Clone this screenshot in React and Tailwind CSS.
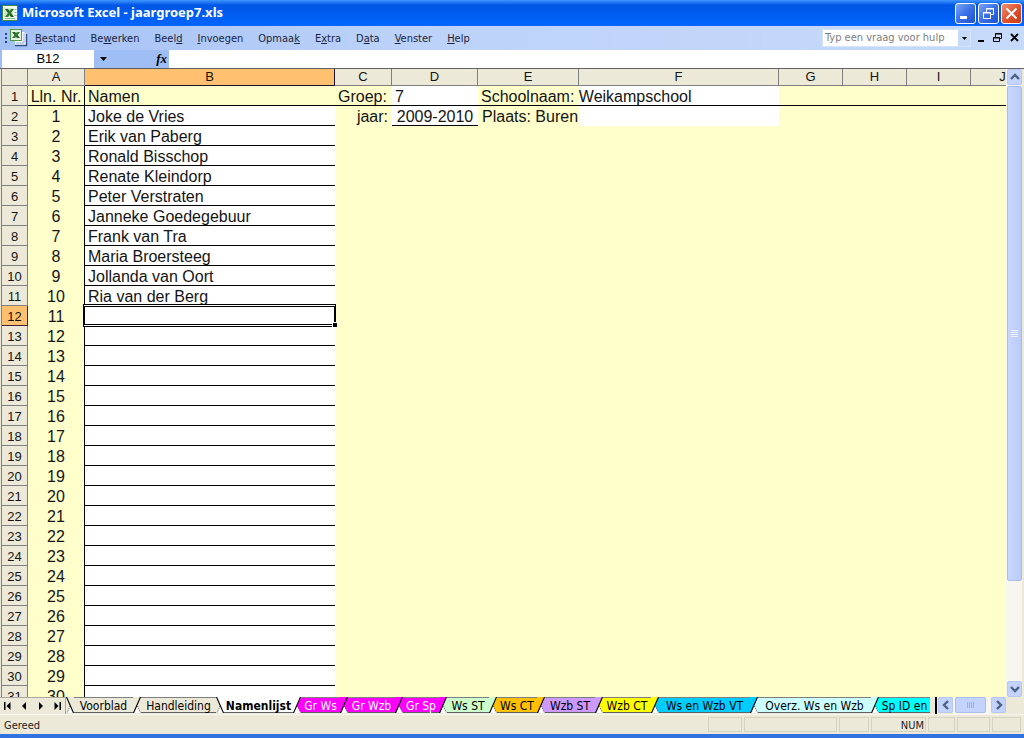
// src/App.jsx
import React from 'react';
import clsx from 'clsx';

const menuItems = [
  ['', 'B', 'estand'],
  ['Be', 'w', 'erken'],
  ['Beel', 'd', ''],
  ['', 'I', 'nvoegen'],
  ['Opmaa', 'k', ''],
  ['E', 'x', 'tra'],
  ['D', 'a', 'ta'],
  ['', 'V', 'enster'],
  ['', 'H', 'elp'],
];

const columns = [
  { name: 'A', width: 'w-[57px]' },
  { name: 'B', width: 'w-[250px]' },
  { name: 'C', width: 'w-[57px]' },
  { name: 'D', width: 'w-[86px]' },
  { name: 'E', width: 'w-[101px]' },
  { name: 'F', width: 'w-[200px]' },
  { name: 'G', width: 'w-16' },
  { name: 'H', width: 'w-16' },
  { name: 'I', width: 'w-16' },
  { name: 'J', width: 'w-16' },
];

const names = [
  'Joke de Vries',
  'Erik van Paberg',
  'Ronald Bisschop',
  'Renate Kleindorp',
  'Peter Verstraten',
  'Janneke Goedegebuur',
  'Frank van Tra',
  'Maria Broersteeg',
  'Jollanda van Oort',
  'Ria van der Berg',
];

const SELECTED_ROW = 12;
const rowNumbers = Array.from({ length: 30 }, (_, i) => i + 2);

// lead = kind of edge on the left side of the tab
const sheets = [
  { title: 'Voorblad', width: 'w-[59px]', color: 'bg-[#ece9d8]', fill: '#ece9d8', lead: 'back' },
  { title: 'Handleiding', width: 'w-[75px]', color: 'bg-[#ece9d8]', fill: '#ece9d8' },
  { title: 'Namenlijst', width: 'w-[69px]', color: 'bg-white', fill: '#ffffff', lead: 'back', active: true },
  { title: 'Gr Ws', width: 'w-[39px]', color: 'bg-[#ff00ff] text-white', fill: '#ff00ff' },
  { title: 'Gr Wzb', width: 'w-[47px]', color: 'bg-[#ff00ff] text-white', fill: '#ff00ff' },
  { title: 'Gr Sp', width: 'w-[36px]', color: 'bg-[#ff00ff] text-white', fill: '#ff00ff' },
  { title: 'Ws ST', width: 'w-[42px]', color: 'bg-[#ccffcc]', fill: '#ccffcc' },
  { title: 'Ws CT', width: 'w-[40px]', color: 'bg-[#ffc000]', fill: '#ffc000' },
  { title: 'Wzb ST', width: 'w-[50px]', color: 'bg-[#cc99ff]', fill: '#cc99ff' },
  { title: 'Wzb CT', width: 'w-[48px]', color: 'bg-[#ffff00]', fill: '#ffff00' },
  { title: 'Ws en Wzb VT', width: 'w-[91px]', color: 'bg-[#00ccff]', fill: '#00ccff' },
  { title: 'Overz. Ws en Wzb', width: 'w-[113px]', color: 'bg-[#ccffff]', fill: '#ccffff' },
  { title: 'Sp ID en', width: 'w-[51px]', color: 'bg-[#00ffff]', fill: '#00ffff' },
];

function ExcelIcon() {
  return (
    <svg className="h-4 w-4 shrink-0" viewBox="0 0 16 16">
      <rect x="0.5" y="0.5" width="15" height="15" fill="#f4faf0" stroke="#3c8a3c" />
      <path d="M2 3 h9 v9 h-9 z" fill="#cfe8c8" />
      <path d="M3 4 h3 l6 8 h-3 z" fill="#1f5f22" />
      <path d="M9 4 h3 l-6 8 h-3 z" fill="#2f7d32" />
      <path d="M12.5 4.5 h2 M12.5 7.5 h2 M12.5 10.5 h2 M3 13.5 h10" stroke="#7db87d" />
    </svg>
  );
}

function WorkbookIcon() {
  return (
    <svg className="h-[18px] w-[18px] shrink-0" viewBox="0 0 18 18">
      <path d="M5 3 h9 l3 3 v11 H5 z" fill="#fff" />
      <path d="M5 16.5 h11.5 V5" fill="none" stroke="#2f4f8c" strokeWidth="1.5" />
      <path d="M6 14 h8 V4" fill="none" stroke="#8aa4d8" />
      <rect x="0.5" y="0.5" width="11" height="11" fill="#e8f5e4" stroke="#4c9a4c" />
      <path d="M2 3 h3 l5 6 h-3 z" fill="#1f5f22" />
      <path d="M7 3 h3 l-5 6 h-3 z" fill="#2f7d32" />
    </svg>
  );
}

function WindowButton({ label, danger, children }) {
  return (
    <button
      aria-label={label}
      className={clsx(
        'flex h-[21px] w-[21px] items-center justify-center rounded-[3px] border border-white',
        danger
          ? 'bg-linear-to-br from-[#f09070] via-[#e0532c] to-[#c83c14]'
          : 'bg-linear-to-br from-[#7ca4f4] via-[#3b6fe6] to-[#1e50d0]'
      )}
    >
      <svg className="h-[19px] w-[19px]" viewBox="0 0 19 19" fill="none" stroke="#fff">
        {children}
      </svg>
    </button>
  );
}

function TitleBar() {
  return (
    <header className="flex h-[26px] shrink-0 items-center gap-1 bg-linear-to-b from-[#3d95ff] via-[#0055e5] via-20% to-[#0066ff] pr-0.5 pl-0.5">
      <ExcelIcon />
      <h1 className="flex-1 font-['Noto_Sans','Open_Sans',sans-serif] text-[13px] font-bold text-white">
        Microsoft Excel - jaargroep7.xls
      </h1>
      <div className="flex gap-0.5">
        <WindowButton label="Minimaliseren">
          <path d="M4 13.5 h7" strokeWidth="3" />
        </WindowButton>
        <WindowButton label="Verkleinen">
          <path d="M7.5 8 v-3.5 h7 v6 h-3 M7 5 h8" />
          <path d="M4.5 8.5 h7 v6 h-7 z M4 9 h8" />
        </WindowButton>
        <WindowButton label="Sluiten" danger>
          <path d="M4.5 4.5 L14.5 14.5 M14.5 4.5 L4.5 14.5" strokeWidth="2" />
        </WindowButton>
      </div>
    </header>
  );
}

function MenuBar() {
  return (
    <div className="flex h-6 shrink-0 items-center bg-linear-to-r from-[#a4c1f5] via-[#bcd2f8] via-40% to-[#c6dafa] pr-px pl-1 text-[11px] text-[#1a2440]">
      <svg className="h-4 w-1.5" viewBox="0 0 6 16" fill="#27419a">
        <path d="M1 3 h2 v2 H1 z M1 7 h2 v2 H1 z M1 11 h2 v2 H1 z" />
      </svg>
      <WorkbookIcon />
      <nav className="ml-[7px] flex flex-1 gap-[15px] pt-0.5">
        {menuItems.map(([before, key, after]) => (
          <button key={before + key + after} className="leading-4">
            {before}<span className="underline">{key}</span>{after}
          </button>
        ))}
      </nav>
      <div className="flex h-[18px] w-[149px] border border-[#d4e2fa] bg-white">
        <input
          aria-label="Typ een vraag voor hulp"
          placeholder="Typ een vraag voor hulp"
          className="min-w-0 flex-1 pl-0.5 text-[11px] outline-none placeholder:text-[#808080]"
        />
        <button aria-label="Vragenlijst" className="flex w-3 items-center justify-center bg-[#c6dafa]">
          <svg className="h-[3px] w-[5px]" viewBox="0 0 5 3"><path d="M0 0 h5 L2.5 3 z" /></svg>
        </button>
      </div>
      <div className="ml-1 flex gap-[3px]">
        <button aria-label="Werkmap minimaliseren">
          <svg className="h-3.5 w-3.5" viewBox="0 0 14 14"><path d="M3 9 h6 v2 H3 z" /></svg>
        </button>
        <button aria-label="Werkmap verkleinen">
          <svg className="h-3.5 w-3.5" viewBox="0 0 14 14" fill="none" stroke="#000">
            <path d="M3.5 6 v-3.5 h6 v5 h-2 M3 3 h7 M1.5 6.5 h6 v4 h-6 z M1 7 h7" />
          </svg>
        </button>
        <button aria-label="Werkmap sluiten">
          <svg className="h-3.5 w-3.5" viewBox="0 0 14 14"><path d="M2 3 L9 10 M9 3 L2 10" stroke="#000" strokeWidth="1.8" /></svg>
        </button>
      </div>
    </div>
  );
}

function FormulaBar() {
  return (
    <div className="flex h-[18px] shrink-0 bg-[#9ebef5] pl-0.5 font-['Liberation_Sans',Arial,sans-serif]">
      <input aria-label="Naamvak" defaultValue="B12" className="w-[92px] bg-white text-center text-[13px] outline-none" />
      <button aria-label="Namen" className="flex w-[18px] items-center justify-center">
        <svg className="h-1 w-[7px]" viewBox="0 0 7 4"><path d="M0 0 h7 L3.5 4 z" /></svg>
      </button>
      <button
        aria-label="Functie invoegen"
        className="w-[57px] pr-0.5 text-right font-['Liberation_Serif',serif] text-[13px] leading-4 font-bold italic"
      >
        fx
      </button>
      <input aria-label="Formulebalk" className="min-w-0 flex-1 bg-white px-1 text-[13px] outline-none" />
    </div>
  );
}

function RowHeader({ number }) {
  const selected = number === SELECTED_ROW;
  return (
    <th
      scope="row"
      className={clsx(
        'h-5 border-r border-b p-0 pt-0.5 text-center text-[13px] leading-[17px] font-normal',
        selected ? 'border-[#40203a] bg-[#ffc06f]' : 'border-[#808080] bg-[#ece9d8]'
      )}
    >
      {number}
    </th>
  );
}

function Sheet() {
  return (
    <div className="min-w-0 flex-1 overflow-hidden border-l border-[#808080] bg-[#ffffcc]">
      <table className="w-full table-fixed border-separate border-spacing-0 font-['Liberation_Sans',Arial,sans-serif] text-[16px] leading-[17px] whitespace-nowrap text-[#141414]">
        <thead>
          <tr className="text-[13px] leading-4">
            <th className="h-[17px] w-[26px] border-r border-b border-[#808080] bg-[#ece9d8] p-0"></th>
            {columns.map((column) => (
              <th
                key={column.name}
                scope="col"
                className={clsx(
                  'h-[17px] border-r border-b p-0 font-normal',
                  column.width,
                  column.name === 'B' ? 'border-[#201030] bg-[#ffc06f]' : 'border-[#808080] bg-[#ece9d8]'
                )}
              >
                {column.name}
              </th>
            ))}
            {/* takes up the rest of a wide window */}
            <th className="border-b border-[#808080] bg-[#ece9d8] p-0"></th>
          </tr>
        </thead>
        <tbody>
          <tr>
            <RowHeader number={1} />
            <td className="border-r border-b border-black p-0 pt-0.5 text-center">Lln. Nr.</td>
            <td className="border-b border-black p-0 pt-0.5 pl-[3px]">Namen</td>
            <td className="border-b border-black p-0 pt-0.5 pl-[3px]">Groep:</td>
            <td className="border-b border-black bg-white p-0 pt-0.5 pl-[3px]">7</td>
            <td className="border-b border-black p-0 pt-0.5 pl-[3px]">Schoolnaam: Weikampschool</td>
            <td className="border-b border-black bg-white p-0"></td>
            <td colSpan={5} className="border-b border-black p-0"></td>
          </tr>
          {rowNumbers.map((row) => (
            <tr key={row} className="align-top">
              <RowHeader number={row} />
              <td className="border-r border-black p-0 pt-0.5 text-center">{row - 1}</td>
              <td className="relative border-b border-black bg-white p-0 pt-0.5 pl-[3px]">
                {names[row - 2]}
                {row === SELECTED_ROW && (
                  <div className="absolute -top-0.5 -right-px -bottom-0.5 -left-0.5 z-10 border-x-2 border-y-3 border-black bg-white [border-bottom-style:double] [border-top-style:double]">
                    <span className="absolute -right-[3px] -bottom-[3px] h-[5px] w-[5px] border-t border-l border-white bg-black"></span>
                  </div>
                )}
              </td>
              {row === 2 && (
                <>
                  <td className="p-0 pt-0.5 pr-1 text-right">jaar:</td>
                  <td className="border-b border-black bg-white p-0 pt-0.5 text-center">2009-2010</td>
                  <td className="p-0 pt-0.5 pl-1">Plaats: Buren</td>
                  <td className="bg-white p-0"></td>
                </>
              )}
              <td colSpan={row === 2 ? 5 : 9} className="p-0"></td>
            </tr>
          ))}
        </tbody>
      </table>
    </div>
  );
}

function ScrollButton({ label, path }) {
  return (
    <button
      aria-label={label}
      className="flex h-4 w-[15px] shrink-0 items-center justify-center rounded-[2px] border border-[#b4c8f0] bg-[#c3d3fb]"
    >
      <svg className="h-2.5 w-2.5" viewBox="0 0 10 10" fill="none" stroke="#4d6185" strokeWidth="2.4">
        <path d={path} />
      </svg>
    </button>
  );
}

function VerticalScrollbar() {
  return (
    <div className="mr-0.5 flex w-4 shrink-0 flex-col items-end bg-[#f6f5ef]">
      <ScrollButton label="Omhoog" path="M1 7 L5 3 L9 7" />
      <div className="min-h-0 w-[15px] flex-1">
        <div className="mt-px flex h-[83%] flex-col items-center justify-center gap-px rounded-[2px] border border-[#a8bdea] bg-linear-to-r from-[#c9d7fc] to-[#b8cbf8]">
          <span className="h-px w-[7px] bg-[#eef4fe]"></span>
          <span className="h-px w-[7px] bg-[#eef4fe]"></span>
          <span className="h-px w-[7px] bg-[#eef4fe]"></span>
          <span className="h-px w-[7px] bg-[#eef4fe]"></span>
        </div>
      </div>
      <ScrollButton label="Omlaag" path="M1 3 L5 7 L9 3" />
    </div>
  );
}

// Slanted edge between two tabs
function TabEdge({ left, right, back }) {
  return (
    <svg className="h-4 w-2 shrink-0" viewBox="0 0 8 16">
      <rect width="8" height="16" fill="#fff" />
      {back ? (
        <>
          <path d="M0 0 L4 8 L1 16 H0 z" fill={left} />
          <path d="M0 0 H8 V16 z" fill={right} />
          <path d="M4 9 L1 16" stroke="#555" strokeDasharray="1 1" />
          <path d="M0.5 0 L7.5 16" stroke="#000" strokeWidth="1.2" />
        </>
      ) : (
        <>
          <path d="M0 0 H8 L1 16 H0 z" fill={left} />
          <path d="M8 0 L4 9 L8 16 z" fill={right} />
          <path d="M4.5 9 L7.5 16" stroke="#555" strokeDasharray="1 1" />
          <path d="M7.5 0 L0.5 16" stroke="#000" strokeWidth="1.2" />
        </>
      )}
    </svg>
  );
}

function TabNavButton({ label, path }) {
  return (
    <button aria-label={label} className="flex flex-1 items-center justify-center">
      <svg className="h-2 w-2" viewBox="0 0 8 8"><path d={path} /></svg>
    </button>
  );
}

function SheetTabs() {
  return (
    <div className="flex h-[17px] shrink-0 bg-[#ece9d8]">
      <div className="flex w-[66px] shrink-0 border-t border-r border-[#aca899]">
        <TabNavButton label="Eerste blad" path="M0 0 h1.5 v8 H0 z M6.5 0 v8 L2.5 4 z" />
        <TabNavButton label="Vorig blad" path="M6 0 v8 L2 4 z" />
        <TabNavButton label="Volgend blad" path="M2 0 v8 L6 4 z" />
        <TabNavButton label="Laatste blad" path="M1.5 0 v8 L5.5 4 z M6.5 0 h1.5 v8 H6.5 z" />
      </div>
      <div className="flex min-w-0 flex-1 overflow-hidden">
        {sheets.map((sheet, i) => (
          <React.Fragment key={sheet.title}>
            <TabEdge
              left={i === 0 ? '#ece9d8' : sheets[i - 1].fill}
              right={sheet.fill}
              back={sheet.lead === 'back'}
            />
            <button
              className={clsx(
                'h-4 shrink-0 border-b border-[#606060] pt-px text-center text-[12px] whitespace-nowrap',
                sheet.width,
                sheet.color,
                sheet.active ? 'leading-4 font-bold' : 'border-t border-t-[#808080] leading-[15px]'
              )}
            >
              {sheet.title}
            </button>
          </React.Fragment>
        ))}
      </div>
      <div className="mr-[18px] ml-[5px] flex w-[71px] shrink-0">
        <span className="mr-px w-0.5 bg-black"></span>
        <ScrollButton label="Naar links" path="M7 1 L3 5 L7 9" />
        <div className="flex flex-1 bg-[#f6f5ef] px-0.5">
          <div className="flex h-4 w-[31px] items-center justify-center gap-px rounded-[2px] border border-[#a8bdea] bg-[#c3d3fb]">
            <span className="h-1.5 w-px bg-[#8cb0f8]"></span>
            <span className="h-1.5 w-px bg-[#8cb0f8]"></span>
            <span className="h-1.5 w-px bg-[#8cb0f8]"></span>
            <span className="h-1.5 w-px bg-[#8cb0f8]"></span>
          </div>
        </div>
        <ScrollButton label="Naar rechts" path="M3 1 L7 5 L3 9" />
      </div>
    </div>
  );
}

function StatusBar() {
  const panel = 'h-[15px] border border-[#d6d2c2]';
  return (
    <footer className="flex h-5 shrink-0 items-center gap-0.5 border-t border-[#f8f6ee] bg-[#ece9d8] pr-[3px] pl-1 text-[11px] text-[#222]">
      <span className="flex-1 pt-1">Gereed</span>
      <span className={clsx(panel, 'w-[34px]')}></span>
      <span className={clsx(panel, 'w-[93px]')}></span>
      <span className={clsx(panel, 'w-[30px]')}></span>
      <span className={clsx(panel, 'w-[55px] pr-px text-right leading-[15px]')}>NUM</span>
      <span className={clsx(panel, 'w-[27px]')}></span>
      <span className={clsx(panel, 'w-[33px]')}></span>
      <span className={clsx(panel, 'w-[29px]')}></span>
    </footer>
  );
}

export default function App() {
  return (
    <div className="flex h-screen flex-col overflow-hidden bg-[#ece9d8] font-['DejaVu_Sans_Condensed','DejaVu_Sans',sans-serif]">
      <TitleBar />
      <MenuBar />
      <FormulaBar />
      <main className="flex min-h-0 flex-1 border-t border-[#606060] pl-px">
        <Sheet />
        <VerticalScrollbar />
      </main>
      <SheetTabs />
      <StatusBar />
      <div className="h-1 shrink-0 bg-[#2f72e0]"></div>
    </div>
  );
}
